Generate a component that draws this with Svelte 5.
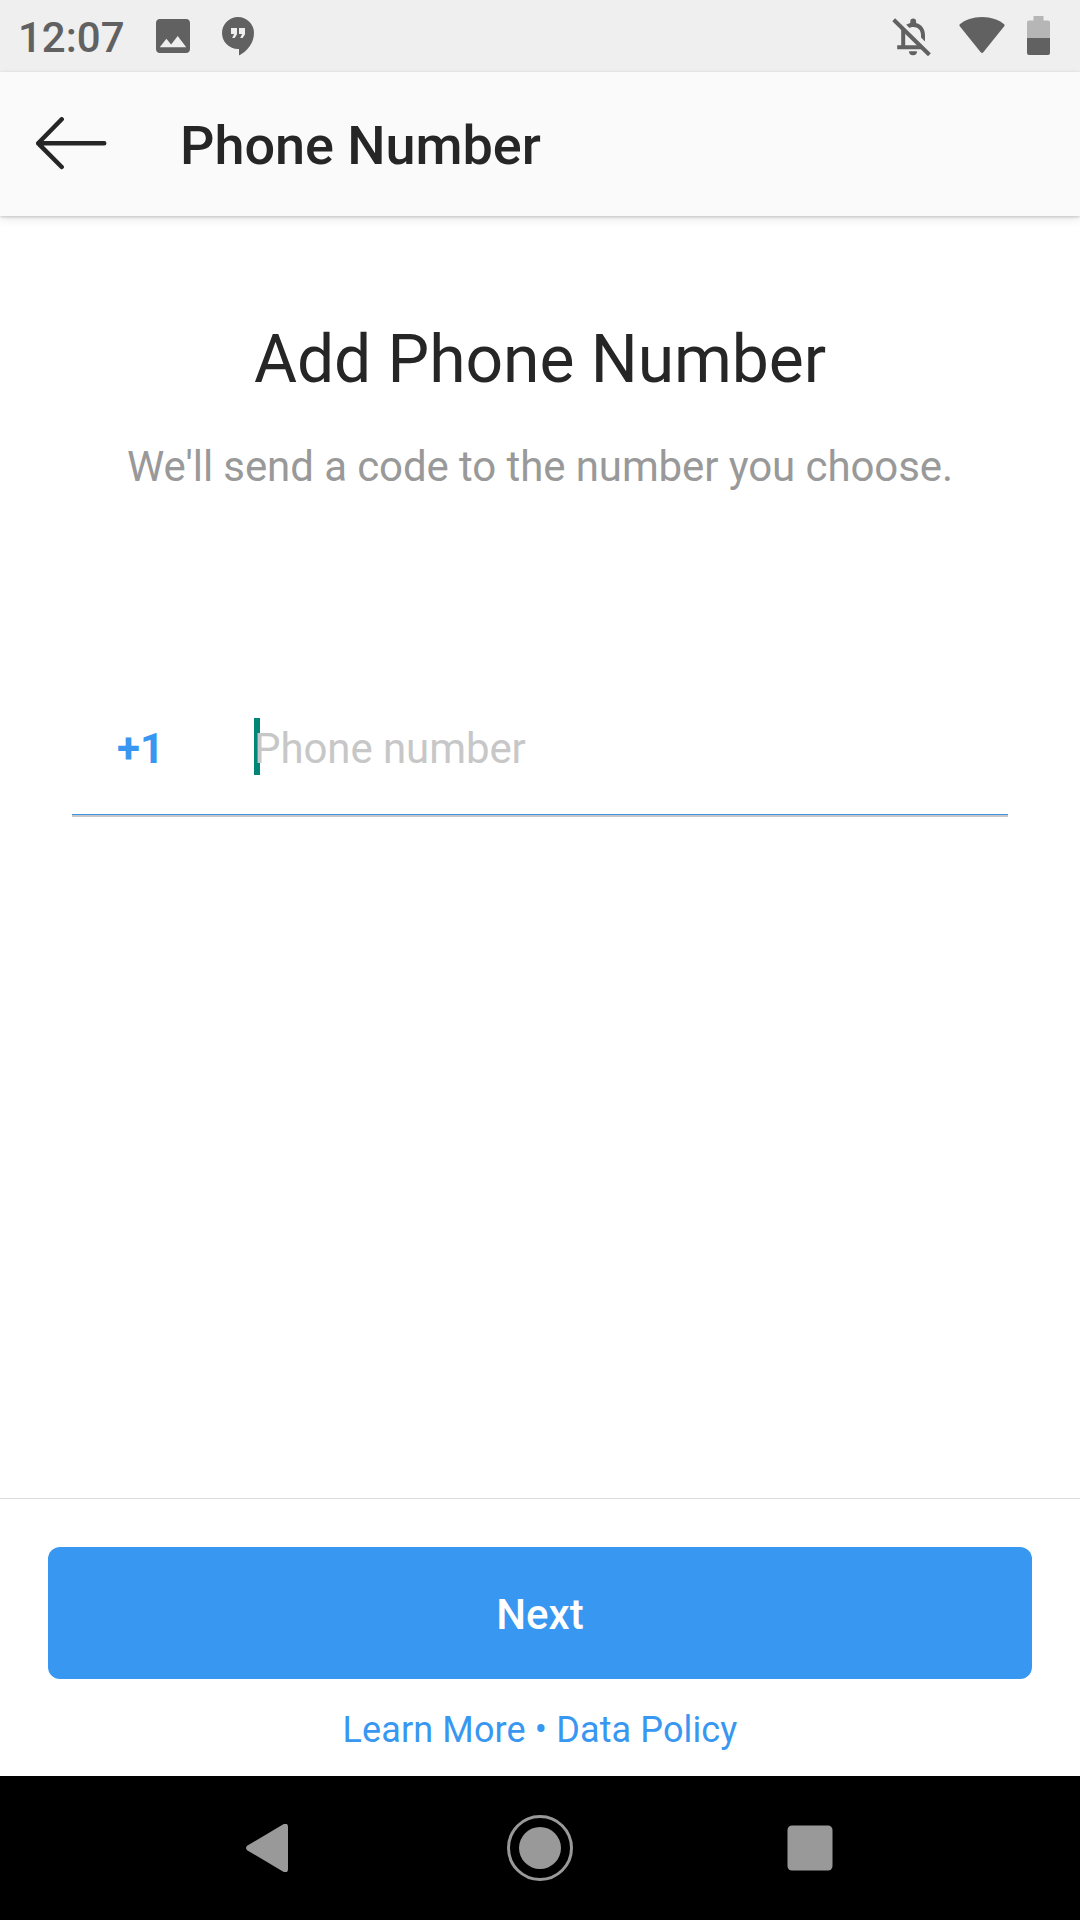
<script>
  let phone = $state('');
  const time = '12:07';
  const dialCode = '+1';
</script>

<div class="screen">
  <div class="status">
    <span class="time">{time}</span>
    <svg class="ic-image" width="34" height="34" viewBox="3 3 18 18" aria-hidden="true">
      <path d="M21 19V5c0-1.100-.9-2-2-2H5c-1.100 0-2 .9-2 2v14c0 1.100.9 2 2 2h14c1.100 0 2-.9 2-2zM8.500 13.500l2.500 3.010L14.500 12l4.500 6H5l3.500-4.500z" />
    </svg>
    <svg class="ic-quote" width="32" height="39" viewBox="0 0 32 39" aria-hidden="true">
      <path d="M16 0a16 16 0 0 0 0 32h1v6.600C25 34.500 32 26 32 16A16 16 0 0 0 16 0z" />
      <path class="cut" d="M9 11h6v6.200L12.700 21H10.200l1.900-4H9zM17 11h6v6.200L20.700 21h-2.500l1.900-4H17z" />
    </svg>
    <span class="gap"></span>
    <svg class="ic-bell" width="40" height="40" viewBox="0 0 40 40" aria-hidden="true">
      <path d="M14.200 7.800q2-1.200 4.100-1.800V4.300a2.900 2.900 0 0 1 5.800 0V6C30 7.500 33 12.500 33 18v6.500l-4-4V18c0-5-3-8-7.800-8-1.500 0-2.500.3-3.600.9z" />
      <path d="M9.200 11.500l4 4V28.200H27l4 4H5.200v-4h4z" />
      <path d="M17 34.300h8a4 4 0 0 1-8 0z" />
      <path class="slash" d="M1.700 2.700L37.400 37.800" />
    </svg>
    <svg class="ic-wifi" width="46" height="37" viewBox="0 0 46 37" aria-hidden="true">
      <path d="M23 0C14 0 6 3 .8 7.200Q0 8 .6 9L21.700 35.300q1.300 1.400 2.600 0L45.400 9q.6-1-.2-1.800C40 3 32 0 23 0z" />
    </svg>
    <svg class="ic-battery" width="23" height="39" viewBox="0 0 23 39" aria-hidden="true">
      <path class="dim" d="M6.500 0h10v4.500H21q2 0 2 2V22H0V6.500q0-2 2-2h4.500z" />
      <path d="M0 22h23v15q0 2-2 2H2q-2 0-2-2z" />
    </svg>
  </div>

  <header class="bar">
    <button class="back" aria-label="Back">
      <svg width="72" height="54" viewBox="0 0 72 54">
        <path d="M25.700 2.300L2.200 26.300l23.500 23.700M2.200 26.300h66" />
      </svg>
    </button>
    <h1>Phone Number</h1>
  </header>

  <main>
    <h2>Add Phone Number</h2>
    <p class="sub">We'll send a code to the number you choose.</p>
    <div class="field">
      <span class="code">{dialCode}</span>
      <div class="entry">
        <span class="caret"></span>
        <input type="tel" placeholder="Phone number" bind:value={phone} />
      </div>
    </div>
  </main>

  <footer>
    <button class="next">Next</button>
    <div class="links"><span>Learn More</span> • <span>Data Policy</span></div>
  </footer>

  <nav>
    <svg width="47" height="48" viewBox="0 0 47 48" aria-label="Back">
      <path d="M36.500.7Q42-2 42 3v42q0 5-5.500 2.300L1.500 26.500Q-1.500 24 1.500 21.500z" />
    </svg>
    <svg width="66" height="66" viewBox="0 0 66 66" aria-label="Home">
      <circle class="ring" cx="33" cy="33" r="31.500" />
      <circle cx="33" cy="33" r="21" />
    </svg>
    <svg width="46" height="46" viewBox="0 0 46 46" aria-label="Recents">
      <rect x=".5" y=".5" width="45" height="45" rx="4.500" />
    </svg>
  </nav>
</div>

<style>
  :global(body) { background: #fff; }
  .screen {
    width: 1080px; height: 1920px; display: flex; flex-direction: column; overflow: hidden;
    background: #fff; color: #262626; font-family: Roboto, sans-serif;
  }
  button { border: 0; font-family: inherit; padding: 0; }
  svg { display: block; flex: none; }

  .status {
    height: 72px; flex: none; box-sizing: border-box; padding: 0 30px 0 18px;
    display: flex; align-items: flex-start; background: #efefef; color: #616161; fill: #616161;
  }
  .time { width: 138px; font-size: 42px; line-height: 50px; font-weight: 500; margin-top: 13px; }
  .ic-image { margin-top: 19px; }
  .ic-quote { margin: 17px 0 0 32px; }
  .cut { fill: #efefef; }
  .gap { flex: 1; }
  .ic-bell { margin: 17px 27px 0 0; }
  .slash { stroke: #616161; stroke-width: 4; }
  .ic-wifi { margin: 17px 22px 0 0; }
  .ic-battery { margin-top: 16px; }
  .dim { fill: #b6b6b6; }

  .bar {
    height: 144px; flex: none; box-sizing: border-box; padding-left: 36px;
    display: flex; align-items: center; background: #fafafa;
    box-shadow: 0 1px 3px rgba(0,0,0,0.2), 0 4px 9px rgba(0,0,0,0.08);
  }
  .back { background: none; width: 144px; }
  .back svg { fill: none; stroke: #262626; stroke-width: 4.500; stroke-linecap: round; stroke-linejoin: round; }
  h1 { margin: 0; font-size: 54px; line-height: 64px; font-weight: 500; letter-spacing: -0.04px; padding-top: 4px; }

  main { flex: 1; padding: 0 72px; }
  h2 { margin: 105px 0 0; font-size: 66px; line-height: 78px; font-weight: 400; letter-spacing: -0.06px; text-align: center; }
  .sub { margin: 43px 0 0; font-size: 42px; line-height: 50px; letter-spacing: -0.09px; color: #999; text-align: center; }
  .field {
    height: 132px; margin-top: 191px; box-sizing: border-box; display: flex; align-items: center;
    border-bottom: 1px solid #4093e4; box-shadow: 0 2px 0 #c7c7c7;
  }
  .code { width: 182px; box-sizing: border-box; padding-left: 45px; font-size: 42px; line-height: 50px; font-weight: 700; color: #3897f0; }
  .entry { position: relative; flex: 1; height: 57px; }
  .caret { position: absolute; left: 0; top: -2px; width: 6px; height: 57px; background: #008577; }
  input {
    position: relative; display: block; width: 100%; height: 57px; padding: 0; border: 0; outline: 0;
    background: none; font: 400 42px Roboto, sans-serif; letter-spacing: -0.08px; color: #262626; caret-color: transparent;
  }
  input::placeholder { color: #c7c7c7; opacity: 1; }

  footer { height: 278px; flex: none; box-sizing: border-box; padding: 48px 48px 0; border-top: 1px solid #dbdbdb; }
  .next {
    display: block; width: 100%; height: 132px; border-radius: 12px; padding-top: 2px;
    background: #3897f0; color: #fff; font-size: 42px; font-weight: 500;
  }
  .links { margin-top: 30px; font-size: 36px; line-height: 42px; letter-spacing: 0.13px; color: #3897f0; text-align: center; }

  nav {
    height: 144px; flex: none; box-sizing: border-box; padding: 0 247px 0 246px;
    display: flex; align-items: center; justify-content: space-between; background: #000; fill: #999;
  }
  .ring { fill: none; stroke: #999; stroke-width: 3; }
</style>
